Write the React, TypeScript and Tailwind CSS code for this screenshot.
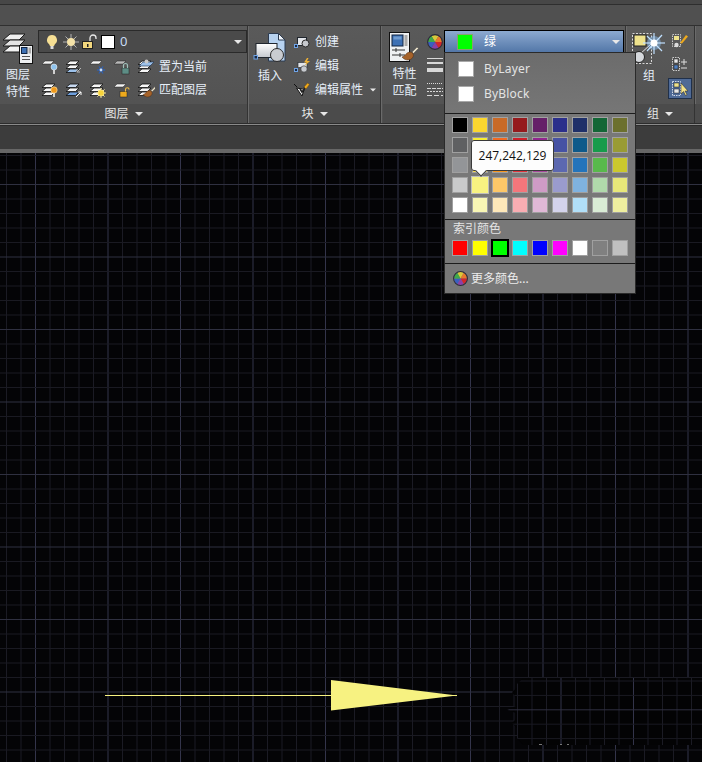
import type { ReactNode } from 'react';

const WHEEL = ['#d8c93a', '#e8792c', '#d3262c', '#8a3fa8', '#3a5fc0', '#3fa84a'];

const PALETTE = [
  ['#000000', '#fbd62f', '#c86a28', '#951a1d', '#652068', '#2b2f8b', '#1f3069', '#136636', '#6c702e'],
  ['#5f6062', '#f9ed32', '#f26a23', '#ce202a', '#92278f', '#4652a4', '#0e5a8a', '#179b4b', '#999b34'],
  ['#939598', '#f7d84a', '#f7941d', '#e2343c', '#a8479c', '#5c68b0', '#2474bb', '#59b94c', '#cbc82d'],
  ['#c9cacb', '#f7f281', '#fdc768', '#f4767b', '#cf9bc6', '#9a9bcd', '#7fb2df', '#b0d9ab', '#e7e779'],
  ['#ffffff', '#f8f6b4', '#fee8b9', '#f9adb2', '#e0b8d6', '#d4d3eb', '#b1dff8', '#d9ecd5', '#efef9f'],
];

const INDEX_COLORS = ['#ff0000', '#ffff00', '#00ff00', '#00ffff', '#0000ff', '#ff00ff', '#ffffff', '#808080', '#c0c0c0'];

function range(from: number, to: number, step: number) {
  const out: number[] = [];
  for (let v = from; v <= to; v += step) out.push(v);
  return out;
}

function Sheet({ y = 0, x = 0, fill = '#f6f6f6' }: { y?: number; x?: number; fill?: string }) {
  return <path d={`M${x + 5} ${y + 1}h9l-3.5 3.5H${x + 1}z`} fill={fill} stroke="#101010" strokeWidth="0.8" />;
}

function Stack({ bottom = '#f6f6f6', top = '#f6f6f6' }: { bottom?: string; top?: string }) {
  return (
    <>
      <Sheet y={9} fill={bottom} />
      <Sheet y={5} />
      <Sheet y={1} fill={top} />
    </>
  );
}

function Small({ children }: { children: ReactNode }) {
  return (
    <svg width="18" height="16" viewBox="0 0 18 16" className="block">
      {children}
    </svg>
  );
}

const Flat = ({ fill = '#f4f4f4' }: { fill?: string }) => <path d="M4 2h9l-3 3H1z" fill={fill} stroke="#222" strokeWidth="0.5" />;

const Bulb = ({ fill, stem = '#eee' }: { fill: string; stem?: string }) => (
  <>
    <circle cx="13" cy="8" r="3" fill={fill} stroke="#eee" strokeWidth="0.6" />
    <rect x="12.2" y="11" width="1.6" height="4" fill={stem} />
  </>
);

const LockBody = ({ fill, line }: { fill: string; line: string }) => (
  <>
    <rect x="9" y="9" width="7" height="6" fill={fill} stroke="#222" strokeWidth="0.5" />
    <path d="M10.5 9V6.5a2 2 0 0 1 4 0V9" fill="none" stroke={line} strokeWidth="1.2" />
  </>
);

function Sun({ cx = 12, cy = 11 }: { cx?: number; cy?: number }) {
  return (
    <g stroke="#fff3b0" strokeWidth="0.9">
      {[0, 45, 90, 135].map((a) => (
        <line key={a} x1={cx - 5} y1={cy} x2={cx + 5} y2={cy} transform={`rotate(${a} ${cx} ${cy})`} />
      ))}
      <circle cx={cx} cy={cy} r="3" fill="#f7d33a" stroke="#f9e27a" />
    </g>
  );
}

function Brush({ x = 0, y = 0, s = 1 }: { x?: number; y?: number; s?: number }) {
  return (
    <g transform={`translate(${x} ${y}) scale(${s})`}>
      <path d="M10 2l5-5 1.5 1.5-5 5z" fill="#e8e0c8" stroke="#444" strokeWidth="0.5" />
      <path d="M0 7c3 0 4-5 8-5 3 0 4 3 3 5-2 4-8 4-11 0z" fill="#a5622a" stroke="#4c2a10" strokeWidth="0.5" />
    </g>
  );
}

function LayerIcons({ row }: { row: number }) {
  const icons =
    row === 0
      ? [
          <Small key="a"><Flat /><Bulb fill="#8fc4ee" /></Small>,
          <Small key="b"><Stack bottom="#9cc1ea" /><path d="M16 9l-4 4m0-3v3h3" fill="none" stroke="#b5b5b5" strokeWidth="1" /></Small>,
          <Small key="c">
            <Flat />
            <g stroke="#2f5fb0" strokeWidth="1.4">
              <line x1="8" y1="11" x2="16" y2="11" />
              <line x1="10" y1="7.5" x2="14" y2="14.5" />
              <line x1="14" y1="7.5" x2="10" y2="14.5" />
            </g>
            <circle cx="12" cy="11" r="1.4" fill="#cfe0f5" />
          </Small>,
          <Small key="d"><Flat fill="#b9b9b9" /><LockBody fill="#5d8d85" line="#9fc0ba" /></Small>,
          <Small key="e"><Stack /><path d="M6 3h11l-4 4H2z" fill="#9cc1ea" stroke="#1c2f4a" strokeWidth="0.6" /><circle cx="9.5" cy="2.4" r="2" fill="#c9c9c9" /></Small>,
        ]
      : [
          <Small key="a"><Stack /><circle cx="13" cy="8" r="3.2" fill="#f09a1d" stroke="#ffe7b0" strokeWidth="0.6" /><rect x="12.2" y="11" width="1.6" height="4" fill="#eee" /></Small>,
          <Small key="b"><Stack bottom="#6f9fdc" top="#c7d8ef" /><path d="M11 15l5-5m-3 0h3v3" fill="none" stroke="#fff" strokeWidth="1" /></Small>,
          <Small key="c"><Stack /><Sun /></Small>,
          <Small key="d">
            <Flat />
            <rect x="7" y="9.5" width="7" height="5.5" fill="#eda91c" stroke="#222" strokeWidth="0.5" />
            <path d="M12.5 9.5V7.5a1.8 1.8 0 0 1 3.6 0" fill="none" stroke="#f3c04a" strokeWidth="1.1" />
          </Small>,
          <Small key="e"><Stack /><Brush x={6} y={7} s={0.8} /></Small>,
        ];
  return (
    <>
      {icons.map((icon, i) => (
        <span key={i} className="flex w-[24px] justify-center">
          {icon}
        </span>
      ))}
    </>
  );
}

function LayerPropsIcon() {
  return (
    <svg width="32" height="34" viewBox="0 0 32 34" className="block">
      <path d="M8 3h15l-6 6H1z" fill="#efefef" stroke="#1a1a1a" />
      <path d="M8 9h15l-6 6H1z" fill="#e4e4e4" stroke="#1a1a1a" />
      <path d="M8 15h15l-6 6H1z" fill="#f2f2f2" stroke="#1a1a1a" />
      <rect x="17.5" y="14.5" width="13" height="18" fill="#eef0f2" stroke="#111" />
      <rect x="19.5" y="16.5" width="5.5" height="6" fill="#3d70b4" stroke="#10233f" />
      <rect x="26.5" y="16.5" width="2.5" height="6" fill="#a9a9a9" />
      <path d="M20 25.5h8M20 28.5h8" stroke="#555" />
    </svg>
  );
}

function InsertIcon() {
  return (
    <svg width="34" height="32" viewBox="0 0 34 32" className="block">
      <path d="M15.5 1.5h10l6.5 6.5v21H15.5z" fill="#b7d2f0" stroke="#2b3a50" />
      <path d="M25.5 1.5V8H32z" fill="#f1f5fa" stroke="#2b3a50" />
      <defs>
        <linearGradient id="ins" x1="0" y1="0" x2="0" y2="1">
          <stop offset="0" stopColor="#ffffff" />
          <stop offset="1" stopColor="#c4c8ce" />
        </linearGradient>
      </defs>
      <rect x="3" y="11.5" width="21" height="14" fill="url(#ins)" stroke="#20262e" />
      <circle cx="24" cy="23" r="6.5" fill="#c9ccd1" stroke="#2a2a2a" />
      <rect x="1" y="23.5" width="3.5" height="3.5" fill="#1c2b44" stroke="#6fa3e6" />
    </svg>
  );
}

function BlockCreateIcon() {
  return (
    <Small>
      <rect x="4.5" y="3.5" width="9" height="8" fill="#e2e5ea" stroke="#20262e" />
      <circle cx="12.5" cy="9.5" r="3.5" fill="#c6c9ce" stroke="#2a2a2a" />
      <rect x="1.5" y="10.5" width="3" height="3" fill="#1c2b44" stroke="#6fa3e6" />
    </Small>
  );
}

function BlockEditIcon() {
  return (
    <Small>
      <rect x="5" y="4.5" width="9" height="5" fill="#e2e5ea" stroke="#20262e" strokeWidth="0.6" />
      <circle cx="11" cy="11" r="3.2" fill="#c6c9ce" stroke="#2a2a2a" strokeWidth="0.6" />
      <rect x="1.5" y="10.5" width="3" height="3" fill="#1c2b44" stroke="#6fa3e6" />
      <path d="M14 0l-3 4.5h2.5L11.5 8 17 3h-3l1.5-3z" fill="#f0b233" />
    </Small>
  );
}

function AttrEditIcon() {
  return (
    <Small>
      <path d="M1 2l3 3" stroke="#111" />
      <path d="M3.5 6l6 1 2.5-2-3 9z" fill="#fff" stroke="#111" strokeWidth="1" />
      <path d="M7 7l2 3 6-8" fill="none" stroke="#222" strokeWidth="1.6" />
      <path d="M11 5l3.5-4 2 1.5L13 7z" fill="#eda91c" stroke="#5a3a10" strokeWidth="0.4" />
    </Small>
  );
}

function MatchIcon() {
  return (
    <svg width="32" height="32" viewBox="0 0 32 32" className="block">
      <rect x="0.5" y="0.5" width="20" height="29" fill="#eef0f2" stroke="#111" />
      <rect x="3" y="3" width="11" height="11" fill="#3d70b4" stroke="#10233f" />
      <rect x="4.5" y="4.5" width="8" height="3" fill="#6f9bd0" />
      <rect x="15.5" y="3" width="3" height="11" fill="#a9a9a9" />
      <path d="M3 18h13M3 23h13M7 16v4M11 21v4" stroke="#333" />
      <Brush x={13} y={18} s={1} />
    </svg>
  );
}

function ColorWheel({ size }: { size: number }) {
  const c = 8;
  const r = 7;
  return (
    <svg width={size} height={size} viewBox="0 0 16 16" className="block">
      {WHEEL.map((color, i) => {
        const a0 = ((i * 60 - 120) * Math.PI) / 180;
        const a1 = (((i + 1) * 60 - 120) * Math.PI) / 180;
        return (
          <path
            key={color}
            d={`M${c} ${c}L${c + r * Math.cos(a0)} ${c + r * Math.sin(a0)}A${r} ${r} 0 0 1 ${c + r * Math.cos(a1)} ${c + r * Math.sin(a1)}z`}
            fill={color}
          />
        );
      })}
      <circle cx={c} cy={c} r="7.4" fill="none" stroke="#2c2c3a" strokeWidth="1.1" />
    </svg>
  );
}

function LineWeightIcon() {
  return (
    <svg width="16" height="15" viewBox="0 0 16 15" className="block">
      <rect y="0" width="16" height="1" fill="#d8d8d8" />
      <rect y="4" width="16" height="2" fill="#d8d8d8" />
      <rect y="10" width="16" height="4" fill="#d8d8d8" />
    </svg>
  );
}

function LineTypeIcon() {
  return (
    <svg width="16" height="15" viewBox="0 0 16 15" className="block">
      <path d="M0 1.5h16" stroke="#d8d8d8" strokeDasharray="1 1" />
      <path d="M0 6.5h16" stroke="#d8d8d8" strokeDasharray="4 1" />
      <path d="M0 9.5h16" stroke="#d8d8d8" strokeDasharray="2 1" />
      <path d="M0 13.5h16" stroke="#d8d8d8" strokeDasharray="5 2" />
    </svg>
  );
}

function GroupIcon() {
  return (
    <svg width="36" height="36" viewBox="0 0 36 36" className="block">
      <rect x="1.5" y="1.5" width="19" height="30" fill="none" stroke="#d8d8d8" strokeDasharray="2 1.5" />
      <rect x="3" y="3" width="12" height="11" fill="#eee28c" stroke="#222" />
      <line x1="8" y1="23" x2="20" y2="12" stroke="#e8e8e8" />
      <circle cx="8" cy="25" r="5.5" fill="#d5d8dc" stroke="#222" />
      <circle cx="23" cy="11" r="7" fill="#8fc8ff" opacity="0.45" />
      <g stroke="#bfe0ff" strokeWidth="1.2">
        <line x1="12" y1="11" x2="34" y2="11" />
        <line x1="23" y1="1" x2="23" y2="22" />
        <line x1="16" y1="4" x2="31" y2="19" />
        <line x1="31" y1="3" x2="16" y2="19" />
      </g>
      <circle cx="23" cy="11" r="3.5" fill="#ffffff" />
    </svg>
  );
}

function GroupSmallIcons() {
  return (
    <div className="flex flex-col items-center">
      <svg width="18" height="17" viewBox="0 0 18 17" className="block">
        <rect x="1.5" y="1.5" width="8" height="12" fill="none" stroke="#ccc" strokeDasharray="1.5 1" />
        <rect x="3" y="3" width="5" height="4" fill="#eee28c" />
        <circle cx="5.5" cy="12" r="2.2" fill="#ddd" />
        <path d="M9 10l6-8 2 1.5-6 7z" fill="#eda91c" />
      </svg>
      <svg width="18" height="15" viewBox="0 0 18 15" className="mt-[7px] block">
        <rect x="1.5" y="0.5" width="7" height="13" fill="none" stroke="#ccc" strokeDasharray="1.5 1" />
        <rect x="3" y="2" width="4" height="4" fill="#e8e8e8" stroke="#222" strokeWidth="0.5" />
        <rect x="3" y="8" width="4" height="4" fill="#4f7fc0" stroke="#222" strokeWidth="0.5" />
        <path d="M10 5h6M13 2v6M10 11h6" stroke="#ddd" />
      </svg>
      <div className="mt-[6px] flex h-[21px] w-[24px] items-center justify-center border border-[#20304a] bg-[#4f6a96]">
        <svg width="18" height="17" viewBox="0 0 18 17" className="block">
          <rect x="1.5" y="1.5" width="8" height="14" fill="none" stroke="#cfd8e6" strokeDasharray="1.5 1" />
          <rect x="3" y="3" width="5" height="4" fill="#eee28c" stroke="#222" strokeWidth="0.5" />
          <rect x="3" y="9" width="5" height="4" fill="#e8e8e8" stroke="#222" strokeWidth="0.5" />
          <path d="M10 3v11l2.5-2.5 2 4 1.5-.8-2-3.7H17z" fill="#f4e38a" stroke="#222" strokeWidth="0.5" />
        </svg>
      </div>
    </div>
  );
}

function Caret({ className }: { className: string }) {
  return <span className={`inline-block h-0 w-0 border-x-[4px] border-t-[4px] border-x-transparent border-t-[#e8e8e8] ${className}`} />;
}

function Panel({ title, className, children }: { title?: string; className: string; children: ReactNode }) {
  return (
    <section className={`flex h-full shrink-0 flex-col border-r border-r-[#333333] shadow-[1px_0_0_#6a6a6a] ${className}`}>
      <div className="flex min-h-0 flex-1">{children}</div>
      <div className="flex h-[19px] items-center justify-center gap-[6px] bg-[#4b4b4b] text-[12px] leading-none text-[#e6e6e6]">
        {title}
        {title ? <Caret className="" /> : null}
      </div>
    </section>
  );
}

function Ribbon() {
  return (
    <div className="h-[153px] shrink-0 bg-[#505050]">
      <div className="h-[4px] bg-[#474747]" />
      <div className="h-[21px] border-t border-t-[#2e2e2e] bg-[#505050]" />
      <div className="flex h-[98px] border-t border-t-[#303030] bg-gradient-to-b from-[#5a5a5a] to-[#515151]">
        <Panel title="图层" className="w-[248px]">
          <div className="mr-[2px] flex w-[36px] shrink-0 flex-col items-center pt-[5px] text-[12px] leading-[17px] text-[#e6eef8]">
            <LayerPropsIcon />
            <span className="mt-[1px]">图层</span>
            <span>特性</span>
          </div>
          <div className="flex flex-col pt-[4px]">
            <div className="flex h-[23px] w-[209px] items-center border border-[#2a2a2a] bg-[#4a4a4a] pl-[4px] pr-[3px] text-[13px] text-[#c8dcf4]">
              <svg width="16" height="16" viewBox="0 0 16 16" className="ml-[1px] block">
                <path d="M8 1a5 5 0 0 1 3 9l-1 2H6l-1-2a5 5 0 0 1 3-9z" fill="#f6df94" />
                <rect x="6.5" y="12" width="3" height="3" fill="#ddd" />
              </svg>
              <svg width="16" height="16" viewBox="0 0 16 16" className="ml-[3px] block">
                <g stroke="#cfcfcf" strokeWidth="0.8">
                  <line x1="0" y1="8" x2="16" y2="8" />
                  <line x1="8" y1="0" x2="8" y2="16" />
                  <line x1="2.5" y1="2.5" x2="13.5" y2="13.5" />
                  <line x1="13.5" y1="2.5" x2="2.5" y2="13.5" />
                </g>
                <circle cx="8" cy="8" r="4" fill="#f4e2a8" />
              </svg>
              <svg width="16" height="16" viewBox="0 0 16 16" className="ml-[3px] block">
                <rect x="0.5" y="7.5" width="10" height="7" fill="#f3d77e" stroke="#222" />
                <rect x="5" y="10" width="1.5" height="3" fill="#222" />
                <path d="M8 7V4a3 3 0 0 1 6 0v1" fill="none" stroke="#e8e8e8" strokeWidth="1.3" />
              </svg>
              <span className="ml-[3px] h-[14px] w-[14px] border border-black bg-white" />
              <span className="ml-[5px]">0</span>
              <Caret className="ml-auto mr-[1px]" />
            </div>
            <div className="mt-[2px] flex h-[23px] items-center text-[12px] text-[#e6eef8]">
              <LayerIcons row={0} />
              <span className="ml-[1px]">置为当前</span>
            </div>
            <div className="flex h-[23px] items-center text-[12px] text-[#e6eef8]">
              <LayerIcons row={1} />
              <span className="ml-[1px]">匹配图层</span>
            </div>
          </div>
        </Panel>
        <div className="w-[1px] shrink-0" />
        <Panel title="块" className="w-[132px]">
          <div className="flex w-[42px] shrink-0 flex-col items-center pt-[6px] text-[12px] leading-[17px] text-[#e6eef8]">
            <InsertIcon />
            <span className="mt-[3px]">插入</span>
          </div>
          <div className="flex flex-col pt-[4px] text-[12px] text-[#e6eef8]">
            {[
              { icon: <BlockCreateIcon />, label: '创建' },
              { icon: <BlockEditIcon />, label: '编辑' },
              { icon: <AttrEditIcon />, label: '编辑属性', more: true },
            ].map((row) => (
              <div key={row.label} className="flex h-[24px] items-center pl-[2px]">
                {row.icon}
                <span className="ml-[4px]">{row.label}</span>
                {row.more ? <Caret className="ml-[6px] scale-75" /> : null}
              </div>
            ))}
          </div>
        </Panel>
        <div className="w-[2px] shrink-0" />
        <Panel className="w-[243px]">
          <div className="flex w-[43px] shrink-0 flex-col items-center pt-[6px] text-[12px] leading-[17px] text-[#e6eef8]">
            <MatchIcon />
            <span className="mt-[1px]">特性</span>
            <span>匹配</span>
          </div>
          <div className="flex w-[18px] shrink-0 flex-col items-center pt-[8px]">
            <ColorWheel size={16} />
            <div className="mt-[8px]"><LineWeightIcon /></div>
            <div className="mt-[9px]"><LineTypeIcon /></div>
          </div>
          <div className="pt-[4px]">
            <div className="flex h-[23px] w-[180px] items-center border border-black bg-gradient-to-b from-[#8daad0] to-[#5377a8] pl-[12px] pr-[3px] text-[12px] text-white">
              <span className="h-[16px] w-[16px] border border-[#8aa070] bg-[#00ff00]" />
              <span className="ml-[11px]">绿</span>
              <Caret className="ml-auto" />
            </div>
          </div>
        </Panel>
        <Panel title="组" className="w-[69px]">
          <div className="flex w-[42px] shrink-0 flex-col items-center pl-[4px] pt-[6px] text-[12px] leading-[17px] text-[#e6eef8]">
            <GroupIcon />
            <span className="-mt-[1px]">组</span>
          </div>
          <div className="pt-[7px]">
            <GroupSmallIcons />
          </div>
        </Panel>
        <div className="flex flex-1 flex-col">
          <div className="flex-1" />
          <div className="h-[19px] bg-[#4b4b4b]" />
        </div>
      </div>
      <div className="h-[3px] border-y border-y-[#2c2c2c] bg-[#8a8a8a]" />
      <div className="h-[23px] bg-[#3c3c3c]" />
      <div className="h-[4px] bg-[#676767]" />
    </div>
  );
}

function ColorMenu() {
  return (
    <div className="absolute left-[444px] top-[52px] w-[192px] border border-[#2a2a2a] bg-[#787878] text-[#e8e8e8]">
      <div className="flex h-[60px] flex-col gap-[5px] bg-gradient-to-b from-[#6c6c6c] to-[#767676] pl-[13px] pt-[6px] text-[12px] tracking-[0.2px]">
        {['ByLayer', 'ByBlock'].map((name) => (
          <div key={name} className="flex h-[20px] items-center">
            <span className="h-[16px] w-[16px] border border-[#a8a8a8] bg-white" />
            <span className="ml-[10px] text-[#e4e4e4]">{name}</span>
          </div>
        ))}
      </div>
      <div className="grid grid-cols-[repeat(9,16px)] gap-[4px] border-y border-y-[#1c1c1c] pb-[6px] pl-[7px] pt-[3px]">
        {PALETTE.flat().map((color, i) =>
          i === 28 ? (
            <span key={i} className="z-10 -m-[1px] h-[18px] w-[18px] border border-[#bdbdbd]" style={{ backgroundColor: color }} />
          ) : (
            <span key={i} className="h-[16px] w-[16px] border border-[#a0a0a0]" style={{ backgroundColor: color }} />
          ),
        )}
      </div>
      <div className="h-[44px] border-b border-b-[#1c1c1c] pl-[7px]">
        <div className="h-[20px] pl-[1px] text-[12px] leading-[17px] text-[#e4e4e4]">索引颜色</div>
        <div className="grid grid-cols-[repeat(9,16px)] gap-[4px]">
          {INDEX_COLORS.map((color) =>
            color === '#00ff00' ? (
              <span key={color} className="h-[16px] w-[16px] border border-black outline outline-1 outline-black" style={{ backgroundColor: color }} />
            ) : (
              <span key={color} className="h-[16px] w-[16px] border border-[#a0a0a0]" style={{ backgroundColor: color }} />
            ),
          )}
        </div>
      </div>
      <div className="flex h-[29px] items-center pl-[8px] text-[12px] text-[#ececec]">
        <ColorWheel size={15} />
        <span className="ml-[3px]">更多颜色...</span>
      </div>
      <div className="absolute left-[26px] top-[87px] z-20 flex h-[31px] w-[83px] items-center justify-center rounded-[3px] border border-[#3a3a3a] bg-[#fdfdfd] font-['Open_Sans',sans-serif] text-[12px] text-[#111111]">
        247,242,129
        <span className="absolute -bottom-[5px] left-[5px] h-[8px] w-[8px] rotate-45 border-b border-r border-b-[#3a3a3a] border-r-[#3a3a3a] bg-[#fdfdfd]" />
      </div>
    </div>
  );
}

// y values below are relative to the canvas, which starts at 153 on the page
function CanvasDrawing() {
  const xs = range(35.5 - 14.5 * 2, 702, 14.5);
  const ys = range(692 - 153 - 14.5 * 37, 609, 14.5);
  const patchXs = range(517.5, 702, 14.5);
  const patchYs = range(681 - 153, 745 - 153, 14.4);
  const isMajorX = (x: number) => Math.abs(((x - 35.5) / 72.5) % 1) < 0.01;
  const isMajorY = (y: number) => Math.abs(((y - (692 - 153)) / 72.5) % 1) < 0.01;
  const patch = 'M523 525 H702 V592 H523 L517 585 L517 575 L512 570 L517 565 L516 560 L507 557 L516 553 L516 545 L512 539 L517 535 L517 531 Z';
  return (
    <svg width="702" height="609" viewBox="0 0 702 609" className="block">
      {xs.map((x) => (
        <line key={x} x1={x} y1="0" x2={x} y2="609" stroke={isMajorX(x) ? '#33344a' : '#1b1b24'} />
      ))}
      {ys.map((y) => (
        <line key={y} x1="0" y1={y} x2="702" y2={y} stroke={isMajorY(y) ? '#2f3040' : '#1a1a22'} />
      ))}
      <path d={patch} fill="#030304" />
      <clipPath id="patch-clip">
        <path d={patch} />
      </clipPath>
      <g clipPath="url(#patch-clip)">
        {patchXs.map((x, i) => (
          <line key={x} x1={x} y1="525" x2={x} y2="592" stroke={(i - 3) % 5 === 0 ? '#33344a' : '#1b1b24'} />
        ))}
        {patchYs.map((y, i) => (
          <line key={y} x1="505" y1={y} x2="702" y2={y} stroke={i === 2 ? '#2f3040' : '#1a1a22'} />
        ))}
      </g>
      <path d="M105 542.5H457" stroke="#f7f281" />
      <path d="M331 527L457 542.5L331 557.5Z" fill="#f7f281" />
      <path d="M539 591.5h3M560 591.5h2M567 591.5h2" stroke="#777" />
    </svg>
  );
}

export default function App() {
  return (
    <div className="relative flex h-[762px] w-[702px] flex-col overflow-hidden bg-[#040406] font-['Noto_Sans','Noto_Sans_CJK_SC',sans-serif]">
      <Ribbon />
      <div className="min-h-0 flex-1">
        <CanvasDrawing />
      </div>
      <ColorMenu />
    </div>
  );
}
